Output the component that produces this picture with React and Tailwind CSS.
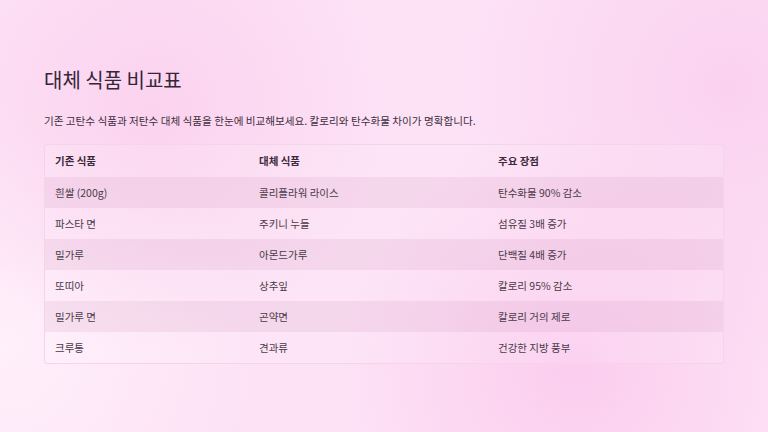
const ROWS = [
  ['흰쌀 (200g)', '콜리플라워 라이스', '탄수화물 90% 감소'],
  ['파스타 면', '주키니 누들', '섬유질 3배 증가'],
  ['밀가루', '아몬드가루', '단백질 4배 증가'],
  ['또띠아', '상추잎', '칼로리 95% 감소'],
  ['밀가루 면', '곤약면', '칼로리 거의 제로'],
  ['크루통', '견과류', '건강한 지방 풍부'],
]

export default function App() {
  return (
    <main
      className="w-[768px] h-[432px] overflow-hidden text-[#3b2b3a] bg-[#fde2f6] bg-[radial-gradient(circle_at_20%_25%,#fbd3ef_0%,transparent_35%),radial-gradient(circle_at_75%_85%,#fbcdee_0%,transparent_35%),radial-gradient(circle_at_0%_80%,#fff0fa_0%,transparent_30%),radial-gradient(circle_at_95%_20%,#fad2f0_0%,transparent_35%)]"
      style={{ fontFamily: '"Noto Sans CJK KR", "Noto Sans", sans-serif' }}
    >
      <div className="px-[44px] pt-[64px]">
        <h1 className="text-[20px] leading-[32px] font-normal text-[#35263a]">대체 식품 비교표</h1>
        <p className="mt-[17px] text-[10.6px] leading-[16px] text-[#3d2e3d]">
          기존 고탄수 식품과 저탄수 대체 식품을 한눈에 비교해보세요. 칼로리와 탄수화물 차이가 명확합니다.
        </p>
        <div className="mt-[15px] border border-[#f3d4ea] rounded-[3px] overflow-hidden bg-white/10">
          <table className="w-full text-[10.5px] border-collapse">
            <thead>
              <tr className="h-[32px]">
                <th className="text-left font-bold pl-[10px] w-[202px]">기존 식품</th>
                <th className="text-left font-bold pl-[12px] w-[239px]">대체 식품</th>
                <th className="text-left font-bold pl-[12px]">주요 장점</th>
              </tr>
            </thead>
            <tbody>
              {ROWS.map((r, i) => (
                <tr key={i} className={i % 2 === 0 ? 'h-[31px] bg-[#b0608f]/10' : 'h-[31px]'}>
                  <td className="pl-[10px] text-[#4a3a48]">{r[0]}</td>
                  <td className="pl-[12px] text-[#4a3a48]">{r[1]}</td>
                  <td className="pl-[12px] text-[#4a3a48]">{r[2]}</td>
                </tr>
              ))}
            </tbody>
          </table>
        </div>
      </div>
    </main>
  )
}
